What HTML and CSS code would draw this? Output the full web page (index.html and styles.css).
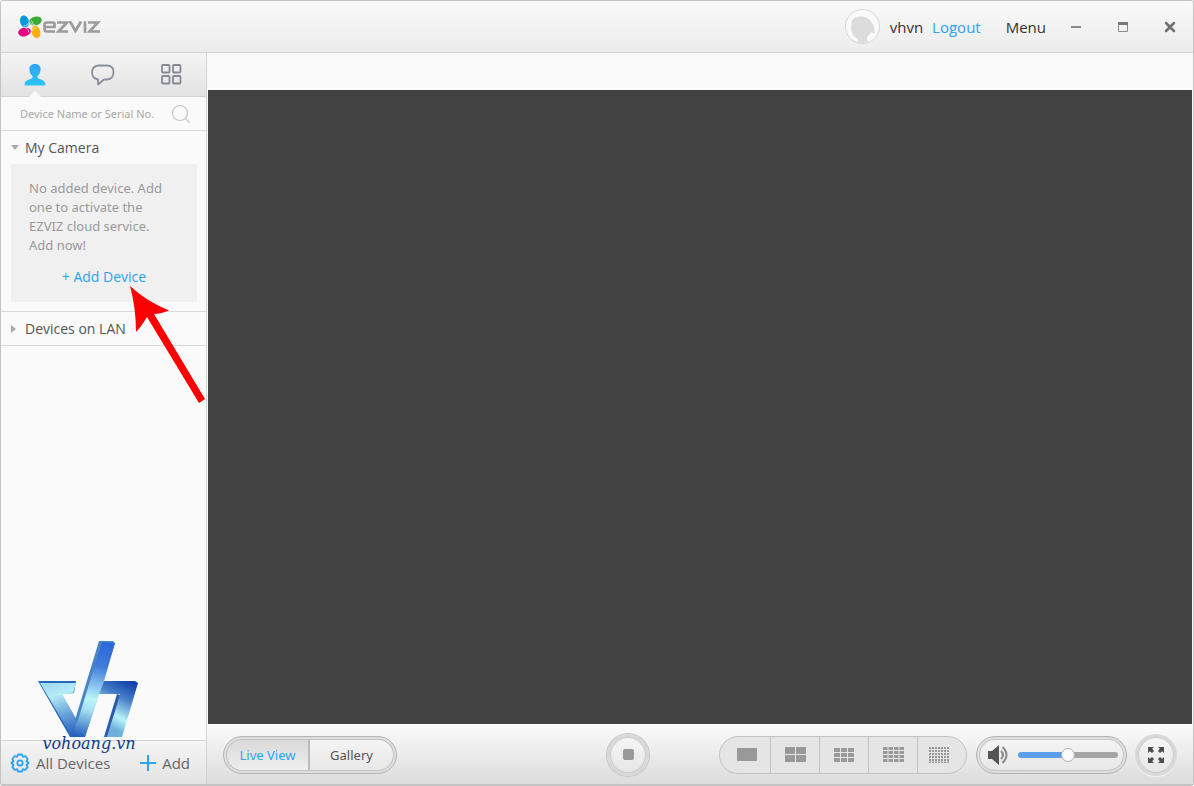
FILE: index.html
```html
<!DOCTYPE html>
<html lang="en">
  <head>
    <meta charset="UTF-8" />
    <meta name="viewport" content="width=device-width, initial-scale=1.0" />
    <title>EZVIZ Studio</title>
    <link rel="stylesheet" href="styles.css">
  </head>
  <body>
    <div class="window">
      <header class="titlebar">
        <div class="brand">
          <svg class="brand-mark" width="25" height="24" viewBox="0 0 25 24">
            <ellipse cx="6.500" cy="6.500" rx="4.400" ry="6.200" fill="#0099e5" transform="rotate(-14 6.500 6.500)" />
            <ellipse cx="17.500" cy="6" rx="6.400" ry="4.400" fill="#3aaa35" transform="rotate(-16 17.500 6)" />
            <ellipse cx="6.500" cy="17" rx="6.400" ry="4.400" fill="#e4007f" transform="rotate(-12 6.500 17)" />
            <ellipse cx="18" cy="17" rx="4.300" ry="6.200" fill="#fbb000" transform="rotate(-14 18 17)" />
            <g fill="none" stroke="#f5f5f5" stroke-width="0.700">
              <path d="M5.500 11a6 6 0 0 0 5.500-4.500M13.500 5.500a6 6 0 0 0 4.500 5M6.500 12.500a6 6 0 0 1 4.500 5M13.500 17.500a6 6 0 0 1 4.500-5" />
              <path d="M7.500 12.500a4 4 0 0 0 4-4M12.500 7.500a4 4 0 0 0 4 3" />
            </g>
          </svg>
          <svg class="brand-word" width="58" height="13" viewBox="0 0 58 13" role="img" aria-label="EZVIZ">
            <g fill="none" stroke="#9c9c9c" stroke-width="2.700">
              <path d="M12 11.500H4Q1.500 11.500 1.500 9V4.500Q1.500 2.500 4 2.500h6Q11.500 2.500 11.500 4V7H2M14 2.500h10L15.500 11.500H25M27 1.500l5.500 9.500L38 1.500M42 1.300v11.500M45 2.500h10L46.500 11.500H57" />
            </g>
          </svg>
        </div>
        <div class="account">
          <span class="avatar">
            <svg width="33" height="33" viewBox="0 0 33 33">
              <path d="M6 10C11 5 20 6 24 10C27 14 30 19 28 24L25 22C23 26 21 26 21 29L22 33H12V29C7 27 5 22 5 18Z" fill="#dcdcdc" />
            </svg>
          </span>
          <span class="user">vhvn</span>
          <a class="logout" href="#">Logout</a>
          <button class="menu">Menu</button>
          <button class="win-btn" aria-label="Minimize">
            <svg width="12" height="12" viewBox="0 0 12 12"><path d="M1 6h10" stroke="#888" stroke-width="2" /></svg>
          </button>
          <button class="win-btn" aria-label="Maximize">
            <svg width="12" height="12" viewBox="0 0 12 12"><path d="M1.500 1.500h9v9h-9z" fill="none" stroke="#888" /><path d="M1 2.500h10" stroke="#777" stroke-width="3" /></svg>
          </button>
          <button class="win-btn" aria-label="Close">
            <svg width="12" height="12" viewBox="0 0 12 12"><path d="M2 2l8 8M10 2l-8 8" stroke="#707070" stroke-width="2.500" stroke-linecap="round" /></svg>
          </button>
        </div>
      </header>

      <div class="content">
        <aside class="sidebar">
          <nav class="tabs">
            <button class="tab active" aria-label="Devices">
              <svg width="22" height="22" viewBox="0 0 22 22">
                <defs><linearGradient id="blue" x1="0" y1="0" x2="0" y2="1"><stop offset="0" stop-color="#2ba4f5" /><stop offset="1" stop-color="#2cc4f2" /></linearGradient></defs>
                <path d="M11 0C7 0 5 2.500 5.500 6C5.700 9 7 11 8.500 12V14C6 15.500 1 16 0.500 20Q0.500 21.500 2 21.500H20Q21.500 21.500 21.500 20C21 16 16 15.500 13.500 14V12C15 11 16.300 9 16.500 6C17 2.500 15 0 11 0Z" fill="url(#blue)" />
              </svg>
            </button>
            <button class="tab" aria-label="Messages">
              <svg width="24" height="22" viewBox="0 0 24 22">
                <path d="M7.500 1.500H16.500Q22.500 2 22.500 8Q22.500 15 16 15.500H13L7 20.500V15.500Q1 14.500 1 8Q1.500 2 7.500 1.500Z" fill="none" stroke="#8b8f9b" stroke-width="1.800" stroke-linejoin="round" />
              </svg>
            </button>
            <button class="tab" aria-label="More">
              <svg width="22" height="22" viewBox="0 0 22 22" fill="none" stroke="#858995" stroke-width="1.800">
                <rect x="1" y="1" width="7.500" height="7.500" rx="1" /><rect x="12" y="1" width="7.500" height="7.500" rx="1" />
                <rect x="1" y="12" width="7.500" height="7.500" rx="1" /><rect x="12" y="12" width="7.500" height="7.500" rx="1" />
              </svg>
            </button>
          </nav>

          <div class="search">
            <input type="text" id="search" placeholder="Device Name or Serial No." aria-label="Device Name or Serial No." />
            <label for="search">
              <svg width="20" height="20" viewBox="0 0 20 20" fill="none" stroke="#c4c4c4" stroke-width="1.200"><circle cx="9" cy="9" r="7.500" /><path d="M14.500 14.500l4 4" /></svg>
            </label>
          </div>

          <section class="group">
            <button class="group-title"><span class="arrow down"></span>My Camera</button>
            <div class="empty">
              <p>No added device. Add one to activate the EZVIZ cloud service. Add now!</p>
              <a class="add-device" href="#">+ Add Device</a>
              <svg class="pointer" width="76" height="118" viewBox="0 0 76 118">
                <path d="M0 0Q16 15 39 24.500Q30 28 24 28L75 113L69 117L17 31Q11 41 6 46Q6 22 0 0Z" fill="#fe0000" />
              </svg>
            </div>
          </section>
          <section class="group">
            <button class="group-title"><span class="arrow right"></span>Devices on LAN</button>
          </section>

          <footer class="side-footer">
            <button class="side-btn">
              <svg width="20" height="20" viewBox="0 0 20 20" fill="none" stroke="#2ba3f0" stroke-width="1.800" stroke-linejoin="round">
                <path d="M8 1.500h4l.8 2.300 2.400-.8 2.500 3L16.500 8l2 2-2 2 1.200 2.200-2.500 2.800-2.400-.8L12 18.500H8l-.8-2.300-2.400.8-2.500-2.800L3.500 12l-2-2 2-2-1.200-2 2.500-3 2.400.8Z" /><circle cx="10" cy="10" r="2.700" />
              </svg>
              All Devices
            </button>
            <button class="side-btn">
              <svg width="16" height="16" viewBox="0 0 16 16"><path d="M8 0v16M0 8h16" stroke="#2ba3f0" stroke-width="2" /></svg>
              Add
            </button>
            <div class="watermark">
              <svg width="102" height="98" viewBox="0 0 102 98">
                <defs>
                  <linearGradient id="v" gradientUnits="userSpaceOnUse" x1="22" y1="42" x2="40" y2="97"><stop offset="0" stop-color="#a4dcf3" /><stop offset="0.200" stop-color="#b5ecf8" /><stop offset="0.550" stop-color="#6ba3d8" /><stop offset="1" stop-color="#1c55b8" /></linearGradient>
                  <linearGradient id="stem" gradientUnits="userSpaceOnUse" x1="66" y1="2" x2="44" y2="97"><stop offset="0" stop-color="#2c67d8" /><stop offset="0.250" stop-color="#3f7bdc" /><stop offset="0.600" stop-color="#bdf5fc" /><stop offset="0.720" stop-color="#a4def2" /><stop offset="1" stop-color="#2560bd" /></linearGradient>
                  <linearGradient id="leg" gradientUnits="userSpaceOnUse" x1="98" y1="45" x2="76" y2="89"><stop offset="0" stop-color="#1242aa" /><stop offset="0.350" stop-color="#467fc8" /><stop offset="0.750" stop-color="#b8f3fa" /><stop offset="1" stop-color="#6fb0dc" /></linearGradient>
                </defs>
                <path d="M0 41H38L36 53H23L39 81L36 97H32Z" fill="#2467bb" />
                <path d="M2 43H38L35 54H24L41 84L47 97H34Z" fill="url(#v)" />
                <path d="M61 1L75 1L77 3L47 97H38L37 80Z" fill="#4785c5" />
                <path d="M64 2L77 3L66 41L61 54L47 97H34L38 84L40 80Z" fill="url(#stem)" />
                <path d="M66 41H97L100 43L84 97H69L82 54H61Z" fill="url(#leg)" />
                <path d="M79 54L82 55L69 97H66Z" fill="#285bac" />
              </svg>
              <span>vohoang.vn</span>
            </div>
          </footer>
        </aside>

        <main class="main">
          <div class="toolbar"></div>
          <div class="view"></div>
          <div class="controls">
            <div class="switch">
              <button class="on">Live View</button>
              <button>Gallery</button>
            </div>
            <button class="round stop" aria-label="Stop"><span></span></button>
            <div class="layouts">
              <button aria-label="1 window"><svg width="20" height="13" viewBox="0 0 20 13"><path d="M0 0h20v13H0z" fill="#999" /></svg></button>
              <button aria-label="4 windows"><svg width="21" height="15" viewBox="0 0 21 15"><path d="M5 0v15M16 0v15" stroke="#999" stroke-width="10" /><path d="M0 7.500h21" stroke="#e5e5e5" /></svg></button>
              <button aria-label="9 windows"><svg width="20" height="14" viewBox="0 0 20 14"><path d="M0 2h20M0 7h20M0 12h20" stroke="#999" stroke-width="4" stroke-dasharray="6 1" /></svg></button>
              <button aria-label="16 windows"><svg width="21" height="15" viewBox="0 0 21 15"><path d="M0 1.500h21M0 5.500h21M0 9.500h21M0 13.500h21" stroke="#999" stroke-width="3" stroke-dasharray="4.500 1" /></svg></button>
              <button aria-label="36 windows"><svg width="21" height="16" viewBox="0 0 21 16"><path d="M0 1h21M0 4h21M0 7h21M0 10h21M0 13h21M0 15.500h21" stroke="#999" stroke-width="2" stroke-dasharray="2 1" /></svg></button>
            </div>
            <div class="volume">
              <svg width="22" height="20" viewBox="0 0 22 20">
                <path d="M0 6H4L11 0V20L4 14H0Z" fill="#555" />
                <path d="M13 6q4 4 0 8M14.500 2q8 8 0 16" fill="none" stroke="#888" stroke-width="2" />
              </svg>
              <input type="range" min="0" max="100" value="50" aria-label="Volume" />
            </div>
            <button class="round" aria-label="Full screen">
              <svg width="16" height="16" viewBox="0 0 16 16" fill="#4c4c4c">
                <path id="corner" d="M0 0H6L4.200 1.800L6 4L4 6L1.800 4.200L0 6Z" />
                <use href="#corner" transform="translate(16 0) scale(-1 1)" /><use href="#corner" transform="translate(0 16) scale(1 -1)" /><use href="#corner" transform="translate(16 16) scale(-1 -1)" />
              </svg>
            </button>
          </div>
        </main>
      </div>
    </div>
  </body>
</html>
```
FILE: styles.css
```css
* {
  box-sizing: border-box;
}
body {
  margin: 0;
  font-family: "Open Sans", "Noto Sans", sans-serif;
  font-size: 14px;
  color: #555;
  background: #fff;
}
button {
  padding: 0;
  border: none;
  background: none;
  font: inherit;
  color: inherit;
  cursor: pointer;
}
a {
  color: #2ba3f0;
  text-decoration: none;
}
svg {
  display: block;
  flex: none;
}
.window {
  display: flex;
  flex-direction: column;
  height: 100vh;
  border: 1px solid #c3c3c3;
  border-bottom-width: 2px;
  border-radius: 3px;
  background: #fafafa;
  overflow: hidden;
}
.titlebar {
  display: flex;
  justify-content: space-between;
  align-items: center;
  height: 52px;
  padding: 0 17px;
  border-bottom: 1px solid #d3d3d3;
  background: linear-gradient(#f9f9f9, #ececec);
}
.brand,
.account {
  display: flex;
  align-items: center;
}
.avatar {
  width: 35px;
  height: 35px;
  margin-right: 10px;
  border: 1px solid #d6d6d6;
  border-radius: 50%;
  background: #fafafa;
  overflow: hidden;
}
.user,
.logout,
.menu {
  font-size: 15px;
  color: #333;
}
.logout {
  margin: 0 25px 0 9px;
  color: #2ba3f0;
}
.menu {
  margin-right: 24px;
}
.win-btn {
  margin-right: 35px;
}
.win-btn:last-child {
  margin-right: 0;
}
.content {
  display: flex;
  flex: 1;
  min-height: 0;
}
.sidebar {
  display: flex;
  flex-direction: column;
  width: 206px;
  border-right: 1px solid #d3d3d3;
}
.tabs {
  display: flex;
  height: 44px;
  border-bottom: 1px solid #d3d3d3;
  background: linear-gradient(#f4f4f4, #e3e3e3);
}
.tab {
  position: relative;
  display: flex;
  flex: 1;
  align-items: center;
  justify-content: center;
}
.tab.active::after {
  content: "";
  position: absolute;
  bottom: -1px;
  left: 50%;
  margin-left: -6px;
  border: 6px solid transparent;
  border-top: none;
  border-bottom-color: #fafafa;
}
.search {
  display: flex;
  align-items: center;
  height: 34px;
  padding: 0 15px 0 19px;
  border-bottom: 1px solid #d8d8d8;
}
.search input {
  flex: 1;
  min-width: 0;
  padding: 0;
  border: none;
  outline: none;
  background: none;
  font: 11px "Noto Sans", sans-serif;
}
.search input::placeholder {
  color: #a8a8a8;
}
.group {
  border-bottom: 1px solid #d8d8d8;
}
.group-title {
  display: flex;
  align-items: center;
  width: 100%;
  height: 33px;
  padding-left: 10px;
}
.arrow {
  width: 8px;
  margin-right: 6px;
}
.arrow.down {
  border: 4px solid transparent;
  border-top: 5px solid #aaa;
  border-bottom: none;
}
.arrow.right {
  height: 8px;
  border: 4px solid transparent;
  border-left: 5px solid #aaa;
  border-right: none;
}
.empty {
  position: relative;
  margin: 0 9px 9px 10px;
  padding: 15px 18px 16px;
  background: #f0f0f0;
  color: #999;
}
.empty p {
  margin: 0 10px 12px 0;
  font: 13px/19px "Noto Sans", sans-serif;
}
.add-device {
  display: block;
  line-height: 19px;
  text-align: center;
}
.pointer {
  position: absolute;
  top: 122px;
  left: 119px;
  z-index: 2;
}
.side-footer {
  position: relative;
  display: flex;
  justify-content: space-between;
  align-items: center;
  height: 44px;
  margin-top: auto;
  padding: 0 16px 0 9px;
  border-top: 1px solid #d3d3d3;
  background: linear-gradient(#f4f4f4, #e3e3e3);
}
.side-btn {
  display: flex;
  align-items: center;
  gap: 6px;
  font-size: 15px;
  line-height: 16px;
  color: #666;
}
.watermark {
  position: absolute;
  left: 37px;
  bottom: 34px;
  display: flex;
  flex-direction: column;
  align-items: center;
  pointer-events: none;
}
.watermark span {
  height: 12px;
  font: italic 16px/12px "DejaVu Serif", "Liberation Serif", serif;
  color: #123a8f;
}
.main {
  display: flex;
  flex: 1;
  flex-direction: column;
  min-width: 0;
}
.toolbar {
  height: 37px;
}
.view {
  flex: 1;
  margin: 0 1px;
  background: #424242;
}
.controls {
  display: flex;
  align-items: center;
  height: 60px;
  padding: 0 16px;
  border-top: 1px solid #fff;
  background: linear-gradient(#fafafa, #dcdcdc);
}
.switch {
  display: flex;
  margin-right: auto;
  padding: 2px;
  border: 1px solid #b5b5b5;
  border-radius: 20px;
  background: #dedede;
}
.switch button {
  width: 84px;
  height: 32px;
  border: 1px solid #c4c4c4;
  border-left: none;
  border-radius: 0 16px 16px 0;
  background: linear-gradient(#f4f4f4, #e8e8e8);
  font: 13px "Noto Sans", sans-serif;
}
.switch .on {
  border: 1px solid #c4c4c4;
  border-right: 2px solid #bbb;
  border-radius: 16px 0 0 16px;
  background: linear-gradient(#d9d9d9, #eee);
  color: #2ba3f0;
}
.round {
  display: flex;
  align-items: center;
  justify-content: center;
  width: 42px;
  height: 42px;
  border: 3px solid #d8d8d8;
  border-radius: 50%;
  background: linear-gradient(#f5f5f5, #e6e6e6);
  box-shadow: inset 0 0 0 1px #c8c8c8, 0 1px 1px #f5f5f5;
}
.stop {
  margin-right: 70px;
  box-shadow: inset 0 0 0 1px #c8c8c8, 0 0 0 1px #c4c4c4;
}
.stop span {
  width: 11px;
  height: 11px;
  border-radius: 2px;
  background: #999;
}
.layouts {
  display: flex;
  height: 38px;
  margin-right: 9px;
  border: 1px solid #c2c2c2;
  border-radius: 19px;
  background: #e5e5e5;
}
.layouts button {
  display: flex;
  align-items: center;
  justify-content: center;
  width: 49px;
  border-left: 1px solid #c2c2c2;
}
.layouts button:first-child {
  width: 50px;
  padding-left: 4px;
  border-left: none;
}
.layouts button:last-child {
  padding-right: 6px;
}
.volume {
  display: flex;
  align-items: center;
  gap: 8px;
  height: 38px;
  margin-right: 8px;
  padding: 0 8px 0 11px;
  border: 1px solid #b5b5b5;
  border-radius: 19px;
  background: linear-gradient(#f5f5f5, #e6e6e6);
  box-shadow: inset 0 0 0 2px #dedede, inset 0 0 0 3px #c8c8c8;
}
.volume input {
  width: 100px;
  height: 16px;
  margin: 0;
  background: none;
  appearance: none;
}
.volume input::-webkit-slider-runnable-track {
  height: 6px;
  border-radius: 3px;
  background: linear-gradient(90deg, #5b9fe8 50%, #a5a5a5 50%);
}
.volume input::-webkit-slider-thumb {
  width: 14px;
  height: 14px;
  margin-top: -4px;
  border: 1px solid #b0b0b0;
  border-radius: 50%;
  background: #fafafa;
  appearance: none;
}
```
